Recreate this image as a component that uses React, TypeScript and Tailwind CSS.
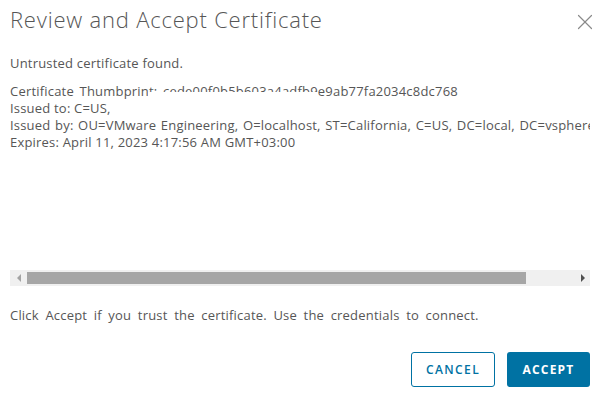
import { X } from 'lucide-react';

export default function App() {
  return (
    <div
      className="w-[603px] h-[401px] bg-white text-[#565656] flex flex-col"
      style={{ fontFamily: '"Open Sans", Lato, sans-serif' }}
    >
      {/* header */}
      <div className="flex items-start justify-between pl-[10px] pr-[5px] pt-[4px]">
        <h1 className="text-[22px] font-light leading-[30px] tracking-[0.8px]">Review and Accept Certificate</h1>
        <button className="mt-[5px] text-[#8a8a8a]">
          <X size={26} strokeWidth={1.1} />
        </button>
      </div>

      <div className="pl-[10px] pt-[19px] w-[590px] flex flex-col">
        <p className="text-[13px] leading-[18px] tracking-[0.2px]">Untrusted certificate found.</p>

        {/* scroll area */}
        <div className="relative mt-[11px] w-[580px] h-[187px] overflow-hidden">
          <div className="text-[13px] leading-[17px] tracking-[0.2px] whitespace-nowrap">
            <div className="[word-spacing:2px]">Certificate Thumbprint: cede00f0b5b603a4adfb9e9ab77fa2034c8dc768</div>
            <div>Issued to: C=US, </div>
            <div className="[word-spacing:1px]">
              Issued by: OU=VMware Engineering, O=localhost, ST=California, C=US, DC=local, DC=vsphere, CN=CA
            </div>
            <div>Expires: April 11, 2023 4:17:56 AM GMT+03:00</div>
          </div>
          {/* redacted */}
          <div className="absolute left-[138px] top-[9px] w-[170px] h-[24px] bg-white" />
        </div>

        {/* horizontal scrollbar */}
        <div className="w-[580px] h-[16px] bg-[#f0f0f0] flex items-center">
          <div className="w-[17px] flex justify-center">
            <div className="w-0 h-0 border-y-[4px] border-y-transparent border-r-[4px] border-r-[#a3a3a3]" />
          </div>
          <div className="w-[499px] h-[12px] bg-[#a6a6a6]" />
          <div className="flex-1 flex justify-end pr-[5px]">
            <div className="w-0 h-0 border-y-[4px] border-y-transparent border-l-[4px] border-l-[#505050]" />
          </div>
        </div>

        <p className="mt-[20px] text-[13px] leading-[18px] tracking-[0.2px] [word-spacing:3px]">
          Click Accept if you trust the certificate. Use the credentials to connect.
        </p>

        <div className="mt-[28px] flex justify-end gap-[12px]">
          <button className="w-[84px] h-[35px] rounded-[3px] border border-[#0072a3] text-[#0072a3] text-[12px] font-semibold tracking-[1.4px]">
            CANCEL
          </button>
          <button className="w-[83px] h-[35px] rounded-[3px] bg-[#0072a3] text-white text-[12px] font-bold tracking-[1.2px]">
            ACCEPT
          </button>
        </div>
      </div>
    </div>
  );
}
